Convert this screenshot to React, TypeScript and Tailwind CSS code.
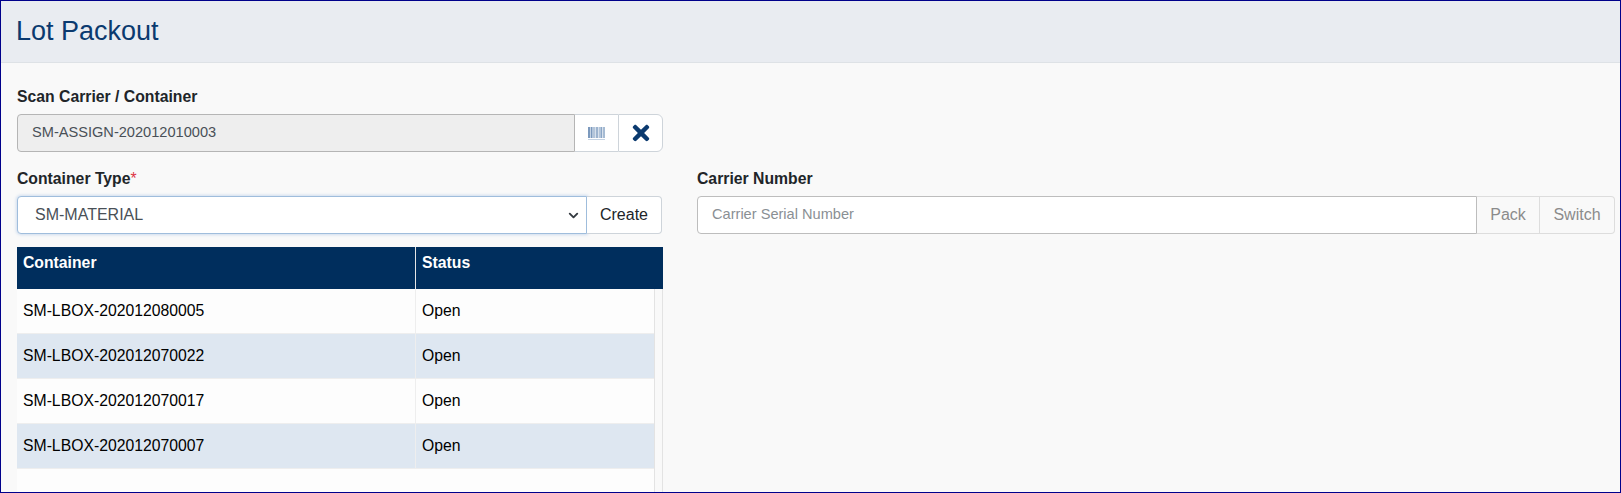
import { ChevronDown } from "lucide-react"
import { FaTimes } from "react-icons/fa"

const rows = [
  "SM-LBOX-202012080005",
  "SM-LBOX-202012070022",
  "SM-LBOX-202012070017",
  "SM-LBOX-202012070007",
]

function Barcode() {
  return (
    <svg width="17" height="13" viewBox="0 0 17 13">
      <rect x="0" y="0" width="2" height="11" fill="#7c99bd" />
      <rect x="2" y="0" width="1" height="11" fill="#c5d3e3" />
      <rect x="3" y="0" width="1" height="11" fill="#7c99bd" />
      <rect x="4" y="0" width="3" height="11" fill="#b3c5da" />
      <rect x="7" y="0" width="1" height="11" fill="#d8e1ec" />
      <rect x="8" y="0" width="2" height="11" fill="#9db4cf" />
      <rect x="10" y="0" width="1" height="11" fill="#d8e1ec" />
      <rect x="11" y="0" width="2" height="11" fill="#b3c5da" />
      <rect x="13" y="0" width="1" height="11" fill="#8ba6c6" />
      <rect x="14" y="0" width="1" height="11" fill="#d8e1ec" />
      <rect x="15" y="0" width="2" height="11" fill="#a6bbd3" />
      <rect x="0" y="12" width="17" height="1" fill="#c5d3e3" />
    </svg>
  )
}

export default function App() {
  return (
    <div className="h-[493px] w-[1621px] overflow-hidden border border-[#00008b] bg-[#f9f9f9] font-['Liberation_Sans',Arial,sans-serif] text-[15.75px] text-[#212529]">
      {/* Page title */}
      <div className="flex h-[62px] items-center border-b border-[#dee2e6] bg-[#e9ecf1] pl-[15px]">
        <h1 className="text-[27px] leading-none text-[#0b3a6f]">Lot Packout</h1>
      </div>

      <div className="pl-[16px] pr-[5px] pt-[24px]">
        {/* Scan field */}
        <label className="block h-[19px] leading-[19px] font-bold">Scan Carrier / Container</label>
        <div className="mt-[8px] flex h-[38px] w-[646px]">
          <div className="flex flex-1 items-center rounded-l-[4px] border border-[#b5b5b5] bg-[#eeeeee] pl-[14px] text-[14.6px] text-[#495057]">
            SM-ASSIGN-202012010003
          </div>
          <button className="flex w-[43px] items-center justify-center border-y border-[#ced4da] bg-white">
            <Barcode />
          </button>
          <button className="flex w-[45px] items-center justify-center rounded-r-[6px] border border-[#ced4da] bg-white">
            <FaTimes className="h-[24px] w-[18px] text-[#0b3a6f]" />
          </button>
        </div>

        <div className="mt-[17px] flex">
          {/* Container type + table */}
          <div className="w-[646px]">
            <label className="block h-[19px] leading-[19px] font-bold">
              Container Type<span className="font-normal text-[#dc3545]">*</span>
            </label>
            <div className="mt-[8px] flex h-[38px] w-[645px] text-[16px]">
              <div className="flex w-[570px] items-center justify-between rounded-l-[4px] border border-[#9fbddc] bg-white pl-[17px] pr-[5px] text-[#495057] shadow-[0_0_3px_1px_rgba(128,170,220,0.35)]">
                SM-MATERIAL
                <ChevronDown className="h-[15px] w-[15px] text-[#343a40]" strokeWidth={3} />
              </div>
              <button className="flex-1 rounded-r-[4px] border-y border-r border-[#ced4da] bg-white text-[#212529]">
                Create
              </button>
            </div>

            <div className="mt-[13px] flex h-[42px] bg-[#002e5d] font-bold text-white">
              <div className="w-[399px] border-r border-[#e5e5e5] pl-[6px] pt-[4px]">Container</div>
              <div className="flex-1 pl-[6px] pt-[4px]">Status</div>
            </div>
            <div className="flex h-[203px] border-r border-[#e3e3e3]">
              <div className="w-[638px] border-r border-[#e3e3e3] bg-[#fdfdfd]">
                {rows.map((row, i) => (
                  <div
                    key={row}
                    className={`flex h-[45px] items-center border-b border-[#eeeeee] text-black ${i % 2 ? "bg-[#dee7f1]" : "bg-[#fdfdfd]"}`}
                  >
                    <div className="flex h-full w-[399px] items-center border-r border-[#eeeeee] pl-[6px]">{row}</div>
                    <div className="pl-[6px]">Open</div>
                  </div>
                ))}
              </div>
            </div>
          </div>

          {/* Carrier number */}
          <div className="ml-[34px] flex-1">
            <label className="block h-[19px] leading-[19px] font-bold">Carrier Number</label>
            <div className="mt-[8px] flex h-[38px]">
              <div className="flex flex-1 items-center rounded-l-[4px] border border-[#bdbdbd] bg-white pl-[14px] text-[14.6px] text-[#8a8f94]">
                Carrier Serial Number
              </div>
              <button className="w-[63px] border-y border-r border-[#dddddd] text-[16px] text-[#8b8b8b]">Pack</button>
              <button className="w-[75px] rounded-r-[4px] border-y border-r border-[#dddddd] text-[16px] text-[#8b8b8b]">Switch</button>
            </div>
          </div>
        </div>
      </div>
    </div>
  )
}
